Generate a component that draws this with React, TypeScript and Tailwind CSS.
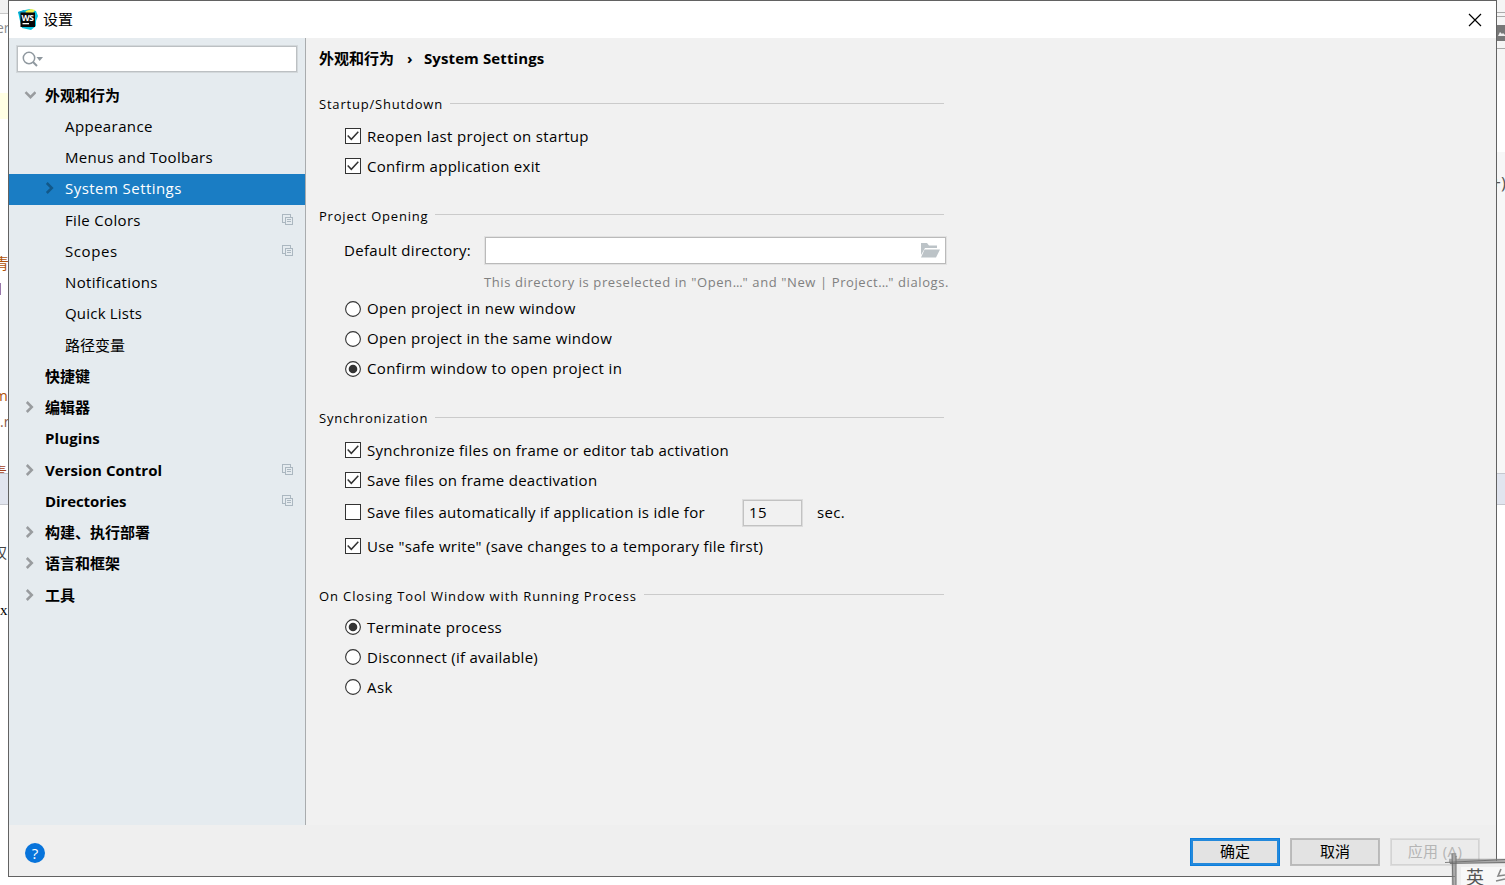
import React from "react";

const LATIN = "font-['Open_Sans','Noto_Sans_CJK_SC',sans-serif]";

function Chevron({ open, active }: { open?: boolean; active?: boolean }) {
  const color = active ? "#125889" : "#999c9f";
  return open ? (
    <svg width="12" height="12" viewBox="0 0 12 12" fill="none" stroke={color} strokeWidth="2.5">
      <path d="M1.500 3.200 6.500 8.200 11.500 3.200" />
    </svg>
  ) : (
    <svg width="12" height="12" viewBox="0 0 12 12" fill="none" stroke={color} strokeWidth="2.5">
      <path d="M2.800 1 7.800 6 2.800 11" />
    </svg>
  );
}

function ProjectIcon() {
  return (
    <svg width="12" height="12" viewBox="0 0 12 12" fill="none" stroke="#abb7c0" shapeRendering="crispEdges">
      <path d="M2.500 8.500H.500V.500H8.500V2.500" />
      <rect x="3.500" y="3.500" width="7" height="7" />
      <path d="M5 5.500H9M5 7.500H9" />
    </svg>
  );
}

type Item = {
  label: string;
  child?: boolean;
  arrow?: "open" | "closed";
  active?: boolean;
  project?: boolean;
  tracking?: string;
};

const items: Item[] = [
  { label: "外观和行为", arrow: "open" },
  { label: "Appearance", child: true, tracking: "tracking-[0.4px]" },
  { label: "Menus and Toolbars", child: true, tracking: "tracking-[0.28px]" },
  { label: "System Settings", child: true, arrow: "closed", active: true, tracking: "tracking-[0.45px]" },
  { label: "File Colors", child: true, project: true, tracking: "tracking-[0.33px]" },
  { label: "Scopes", child: true, project: true, tracking: "tracking-[0.6px]" },
  { label: "Notifications", child: true, tracking: "tracking-[0.35px]" },
  { label: "Quick Lists", child: true, tracking: "tracking-[0.2px]" },
  { label: "路径变量", child: true },
  { label: "快捷键" },
  { label: "编辑器", arrow: "closed" },
  { label: "Plugins", tracking: "tracking-[0.1px]" },
  { label: "Version Control", arrow: "closed", project: true, tracking: "tracking-[0.05px]" },
  { label: "Directories", project: true, tracking: "tracking-[-0.1px]" },
  { label: "构建、执行部署", arrow: "closed" },
  { label: "语言和框架", arrow: "closed" },
  { label: "工具", arrow: "closed" },
];

function TreeRow({ item }: { item: Item }) {
  return (
    <li
      className={`flex h-[31.25px] items-center pb-[2px] pr-[11px] ${item.child ? "pl-[35px]" : "pl-[15px]"} ${
        item.active ? "bg-[#1a7dc4] text-white" : "text-black"
      } ${item.child ? "" : "font-bold"}`}
    >
      <span className="flex w-[21px] shrink-0">
        {item.arrow && <Chevron open={item.arrow === "open"} active={item.active} />}
      </span>
      <span className={`flex-1 whitespace-nowrap leading-5 ${item.tracking ?? ""}`}>{item.label}</span>
      {item.project && <ProjectIcon />}
    </li>
  );
}

function Sidebar() {
  return (
    <aside className="flex w-[297px] shrink-0 flex-col border-r border-[#a9acae] bg-[#e5ebef]">
      <div className="mx-2 mt-2 flex h-[26px] items-center border border-[#bcc0c3] bg-white pl-1 shadow-[0_0_0_1px_#d3d8db]">
        <svg width="22" height="18" viewBox="0 0 22 18" fill="none" stroke="#8f989f" strokeWidth="1.5">
          <circle cx="7" cy="8" r="5.7" />
          <path d="M11 12 15 16" strokeWidth="2" />
          <path d="M14.500 7H21L17.700 11Z" fill="#8f989f" stroke="none" />
        </svg>
      </div>
      <ul className="mt-2">
        {items.map((item) => (
          <TreeRow key={item.label} item={item} />
        ))}
      </ul>
    </aside>
  );
}

function SectionTitle({
  children,
  className,
  line = "mb-[2px]",
  tracking = "tracking-[0.8px]",
}: {
  children: string;
  className: string;
  line?: string;
  tracking?: string;
}) {
  return (
    <div className={`flex h-5 w-[625px] items-center ${className}`}>
      <h2 className={`whitespace-nowrap text-[13px] ${tracking}`}>{children}</h2>
      <div className={`ml-[7px] h-px flex-1 bg-[#cbcbcb] ${line}`} />
    </div>
  );
}

function Check({ on }: { on?: boolean }) {
  return (
    <svg className="shrink-0" width="16" height="16" viewBox="0 0 16 16" fill="none">
      <rect x="0.5" y="0.5" width="15" height="15" fill="#fff" stroke="#333" />
      {on && <path d="M2.700 7.500 6.300 11.300 13.300 3.700" stroke="#333" strokeWidth="1.5" />}
    </svg>
  );
}

function Radio({ on }: { on?: boolean }) {
  return (
    <svg className="shrink-0" width="16" height="16" viewBox="0 0 16 16">
      <circle cx="8" cy="8" r="7.400" fill="#fff" stroke="#333" strokeWidth="1.1" />
      {on && <circle cx="8" cy="8" r="4.300" fill="#333" />}
    </svg>
  );
}

function Option({
  radio,
  on,
  label,
  className = "h-[30px]",
  text = "tracking-[0.27px]",
}: {
  radio?: boolean;
  on?: boolean;
  label: string;
  className?: string;
  text?: string;
}) {
  return (
    <div className={`flex items-center pl-[26px] ${className}`}>
      {radio ? <Radio on={on} /> : <Check on={on} />}
      <span className={`ml-1.5 whitespace-nowrap ${text}`}>{label}</span>
    </div>
  );
}

function Content() {
  return (
    <main className="flex flex-1 flex-col bg-[#f1f1f1] pl-[13px]">
      <div className="flex h-[42px] items-center pb-[2px] font-bold">
        <span className="w-[88px]">外观和行为</span>
        <span className="w-[17px]">›</span>
        <span className="tracking-[0.1px]">System Settings</span>
      </div>

      <SectionTitle className="mt-[14px]">Startup/Shutdown</SectionTitle>
      <div className="mt-[7px]">
        <Option on label="Reopen last project on startup" text="tracking-[0.34px]" />
        <Option on label="Confirm application exit" />
      </div>

      <SectionTitle className="mt-[25px]" line="mb-[4px]">
        Project Opening
      </SectionTitle>
      <div className="mt-[10px] flex h-[29px] items-start pl-[25px]">
        <span className="mt-[4px] w-[141px] tracking-[0.3px]">Default directory:</span>
        <div className="mt-px flex h-[27px] w-[461px] items-center justify-end border border-[#bababa] bg-white pr-[5px] shadow-[0_0_0_1px_#e2e2e2]">
          <svg width="20" height="15" viewBox="0 0 20 15" fill="#bcc3c7">
            <path d="M1 12V0H7L9 2.500H17V5H5L1 12Z" />
            <path d="M4.500 6.500H20L16 14.500H1Z" />
          </svg>
        </div>
      </div>
      <p className="mt-[7px] h-5 whitespace-nowrap pl-[165px] text-[13px] leading-5 tracking-[0.6px] text-[#808080]">
        This directory is preselected in "Open<span className="tracking-[-0.1px]">...</span>" and "New | Project
        <span className="tracking-[-0.1px]">...</span>" dialogs.
      </p>
      <div className="mt-[2px]">
        <Option radio label="Open project in new window" text="mb-[2px] tracking-[0.34px]" />
        <Option radio label="Open project in the same window" text="mb-[2px] tracking-[0.32px]" />
        <Option radio on label="Confirm window to open project in" text="mb-[2px] tracking-[0.38px]" />
      </div>

      <SectionTitle className="mt-[24px]">Synchronization</SectionTitle>
      <div className="mt-[7px]">
        <Option on label="Synchronize files on frame or editor tab activation" />
        <Option on label="Save files on frame deactivation" />
        <div className="flex h-[34px] items-center">
          <Option className="w-[424px]" label="Save files automatically if application is idle for" />
          <div className="mt-[2px] flex h-[26px] w-[59px] items-center border border-[#c2c2c2] pb-[2px] pl-[5px] tracking-[0.3px] shadow-[0_0_0_1px_#dcdcdc]">
            15
          </div>
          <span className="ml-[15px] tracking-[0.3px]">sec.</span>
        </div>
        <Option on className="h-[34px]" label={'Use "safe write" (save changes to a temporary file first)'} />
      </div>

      <SectionTitle className="mt-[23px]" line="mb-[4px]" tracking="tracking-[0.87px]">
        On Closing Tool Window with Running Process
      </SectionTitle>
      <div className="mt-[6px]">
        <Option radio on label="Terminate process" text="tracking-[0.3px]" />
        <Option radio label="Disconnect (if available)" />
        <Option radio label="Ask" text="tracking-[0.4px]" />
      </div>
    </main>
  );
}

function Logo() {
  return (
    <svg width="20" height="21" viewBox="0 0 20 21">
      <path d="M0 3 7 1 12 0 18 2 20 7 18 12 18 17 13 21 4 19 2 12Z" fill="#07c3df" />
      <path d="M8 2 13 0 17 1 15 4H7Z" fill="#eef04a" />
      <path d="M0 3 6 1 8 4 3 9Z" fill="#08a3cc" />
      <rect x="2.500" y="3.500" width="14.500" height="14.500" fill="#080808" />
      <text x="3.500" y="11.500" fontSize="8.500" fontWeight="700" fill="#fff" fontFamily="Open Sans" textLength="12.500">
        WS
      </text>
      <rect x="4.500" y="14" width="6.500" height="1.300" fill="#fff" />
    </svg>
  );
}

function TitleBar() {
  return (
    <header className="flex h-[37px] shrink-0 items-center bg-white pl-[9px] pr-[14px]">
      <Logo />
      <span className="mb-[2px] ml-[5px] flex-1 text-black">设置</span>
      <svg width="14" height="14" viewBox="0 0 14 14" stroke="#000" strokeWidth="1.2">
        <path d="M1 1 13 13M13 1 1 13" />
      </svg>
    </header>
  );
}

function Footer() {
  const button = "flex h-[26px] w-[88px] items-center justify-center pb-[2px]";
  return (
    <footer className="flex h-[51px] shrink-0 items-center bg-[#efefef] pl-4 pr-[17px] pt-[3px]">
      <span className="mt-[2px] flex size-5 items-center justify-center rounded-full bg-[#0874db] text-[15px] leading-none text-white">
        ?
      </span>
      <div className="ml-auto flex gap-3">
        <button className={`${button} border-2 border-[#2489db] bg-[#e3e3e3] shadow-[0_0_0_1px_#0a7edf]`}>确定</button>
        <button className={`${button} border border-[#b9b9b9] bg-[#e3e3e3] shadow-[0_0_0_1px_#bdbdbd]`}>取消</button>
        <button
          className={`${button} border border-[#d3d3d3] bg-[#ebebeb] tracking-[0.4px] text-[#b5b5b5] shadow-[0_0_0_1px_#dcdcdc]`}
        >
          应用 (A)
        </button>
      </div>
    </footer>
  );
}

function LeftBackdrop() {
  return (
    <div className="relative w-2 shrink-0 overflow-hidden whitespace-nowrap bg-white text-[15px] leading-5">
      <div className="h-[14px] border-b border-[#c8c8c8] bg-[#f1f1f1]" />
      <span className="absolute -left-[4px] top-[18px] text-[14px] text-[#8b8b8b]">er</span>
      <div className="absolute top-[93px] h-[26px] w-full bg-[#ffffe4]" />
      <span className="absolute -left-[6px] top-[253px] text-[#b0540a]">青</span>
      <div className="absolute left-0 top-[283px] h-3 w-px bg-[#9876aa]" />
      <span className="absolute -left-[6px] top-[385px] text-[#b0540a]">m</span>
      <span className="absolute left-0 top-[412px] text-[14px] text-[#8d5a45]">.r</span>
      <span className="absolute -left-[8px] top-[462px] text-[#a3401a]">青</span>
      <div className="absolute top-[473px] h-[32px] w-full border-y border-[#c5c8cf] bg-[#e1e5ef]" />
      <span className="absolute -left-[8px] top-[542px] text-[#444]">权</span>
      <span className="absolute left-0 top-[600px] font-['Liberation_Serif',serif] text-[15px] text-black">x</span>
    </div>
  );
}

function RightBackdrop() {
  return (
    <div className="relative w-2 shrink-0 overflow-hidden bg-white">
      <div className="h-[80px] bg-[#f5f5f5]" />
      <div className="absolute top-[12px] h-[5px] w-full border-y border-[#aaa]" />
      <div className="absolute top-[25px] flex h-[16px] w-full items-center bg-[#777]">
        <svg width="8" height="8" viewBox="0 0 8 8" fill="#eee">
          <path d="M1 7 3 3 5 5 6 4 8 6V7Z" />
        </svg>
      </div>
      <div className="absolute top-[48px] h-px w-full bg-[#aaa]" />
      <div className="absolute top-[152px] h-[322px] w-full bg-[#f7f7f7]" />
      <span className="absolute -right-px top-[173px] whitespace-nowrap text-[17px] leading-5 text-[#555]">+)</span>
      <div className="absolute top-[473px] h-[32px] w-full border-y border-[#c5c8cf] bg-[#e1e5ef]" />
    </div>
  );
}

function InputMethodBar() {
  return (
    <div className="absolute bottom-0 right-0 h-[32px] w-[60px] overflow-hidden">
      <svg className="absolute inset-0" width="60" height="32" viewBox="0 0 60 32">
        <rect x="10" y="8" width="50" height="24" fill="#eeeeee" />
        <path d="M4 8 60 8M9 0V32" stroke="#8d8d8d" strokeWidth="4.500" opacity=".7" />
        <path d="M0 9.500 60 6.500M5 10.500 60 9.500M7 1 8 32M11 3V32" stroke="#666" strokeWidth=".8" />
        <rect x="16" y="14" width="44" height="18" fill="#f8f8f8" />
      </svg>
      <span className="absolute left-[21px] top-[12px] whitespace-nowrap font-['Noto_Sans_CJK_SC',sans-serif] text-[18px] leading-[22px] text-[#555]">
        英
      </span>
      <svg className="absolute left-[50px] top-[15px]" width="10" height="17" viewBox="0 0 10 17" fill="none" stroke="#888" strokeWidth="1.6">
        <path d="M6 1 3 8 10 7M1 13 10 11" />
      </svg>
    </div>
  );
}

export default function App() {
  return (
    <div className={`relative flex h-[885px] w-[1505px] overflow-hidden bg-white text-[15px] leading-5 text-black ${LATIN}`}>
      <LeftBackdrop />
      <div className="flex h-[877px] w-[1489px] shrink-0 flex-col border border-[#626262]">
        <TitleBar />
        <div className="flex min-h-0 flex-1">
          <Sidebar />
          <Content />
        </div>
        <Footer />
      </div>
      <RightBackdrop />
      <InputMethodBar />
    </div>
  );
}
